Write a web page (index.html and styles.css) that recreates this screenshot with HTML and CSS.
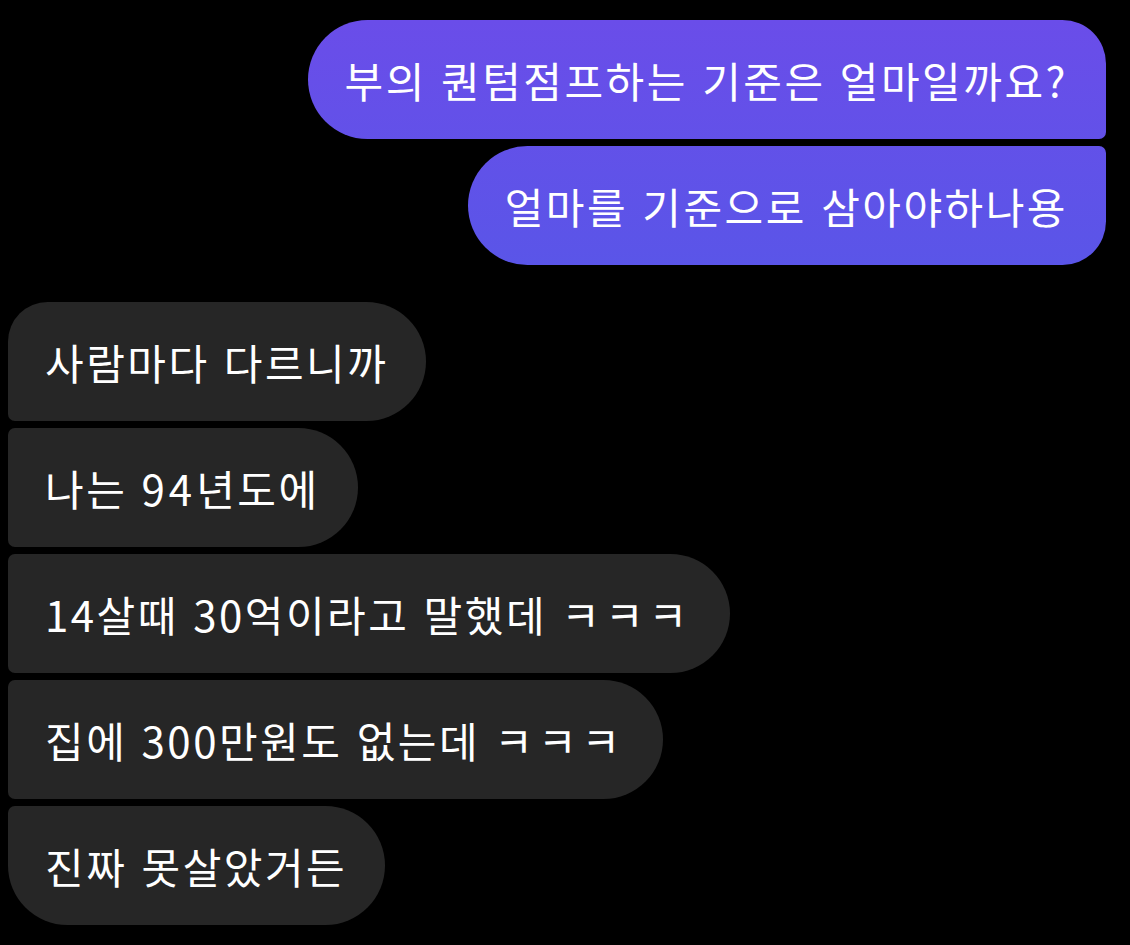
FILE: index.html
```html
<!DOCTYPE html>
<html lang="ko">
<head>
<meta charset="UTF-8">
<title>대화</title>
<link rel="stylesheet" href="styles.css">
</head>
<body>
<div class="chat">
  <div class="group sent">
    <div class="bubble first">부의 퀀텀점프하는 기준은 얼마일까요?</div>
    <div class="bubble last">얼마를 기준으로 삼아야하나용</div>
  </div>
  <div class="group received">
    <div class="bubble first">사람마다 다르니까</div>
    <div class="bubble">나는 <span class="num">94</span>년도에</div>
    <div class="bubble">14살때 30억이라고 말했데 <span class="laugh">ㅋㅋㅋ</span></div>
    <div class="bubble">집에 300만원도 없는데 <span class="laugh">ㅋㅋㅋ</span></div>
    <div class="bubble last">진짜 못살았거든</div>
  </div>
</div>
</body>
</html>
```

FILE: styles.css
```css
html {
	background: #000;
}
body {
	margin: 0;
	font-family: "Noto Sans CJK KR", "Noto Sans", sans-serif;
	color: #fff;
}
.chat {
	display: flex;
	flex-direction: column;
	gap: 37px;
	padding: 20px 24px 0 8px;
}
.group {
	display: flex;
	flex-direction: column;
	gap: 7px;
}
.sent {
	align-items: flex-end;
}
.received {
	align-items: flex-start;
}
.bubble {
	height: 119px;
	line-height: 119px;
	padding: 0 38px 0 37px;
	font-size: 42px;
	letter-spacing: 2.5px;
	white-space: nowrap;
	box-sizing: border-box;
}
.num {
	letter-spacing: 4px;
}
.laugh {
	letter-spacing: 5px;
}
/* one gradient shared by the whole sent group */
.sent .bubble {
	background: linear-gradient(180deg, #6a4de9 20px, #5a55e8 265px) fixed;
	border-radius: 60px 7px 7px 60px;
}
.sent .bubble.first {
	border-top-right-radius: 44px;
}
.sent .bubble.last {
	border-bottom-right-radius: 44px;
}
.received .bubble {
	background: #262626;
	border-radius: 7px 60px 60px 7px;
}
.received .bubble.first {
	border-top-left-radius: 40px;
}
.received .bubble.last {
	border-bottom-left-radius: 60px;
}
```
